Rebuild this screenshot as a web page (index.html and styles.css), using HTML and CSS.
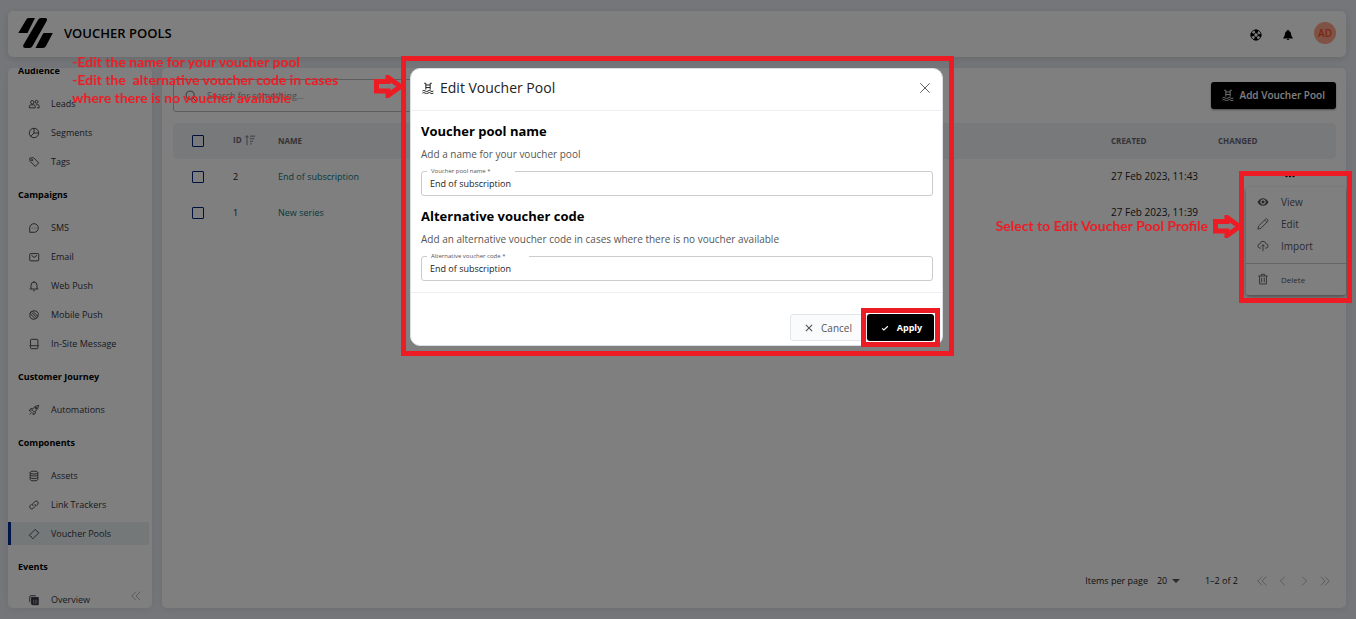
FILE: index.html
```html
<!DOCTYPE html>
<html lang="en">
<head>
  <meta charset="UTF-8" />
  <meta name="viewport" content="width=device-width, initial-scale=1.0" />
  <title>Voucher Pools</title>
  <link rel="stylesheet" href="styles.css">
</head>
<body>

<!-- shared icons -->
<svg class="sprite" aria-hidden="true">
  <symbol id="i-pool" viewBox="0 0 14 14"><path d="M2.500 1.500h2v7.500M11.500 1.500h-2v7.500M4.500 3.500h5M4.500 6.500h5M.5 10.500q1.600-1.500 3.200 0t3.200 0 3.200 0 3.200 0M.5 13q1.600-1.500 3.200 0t3.200 0 3.200 0 3.200 0"/></symbol>
  <symbol id="i-leads" viewBox="0 0 14 14"><circle cx="5" cy="5" r="2"/><circle cx="10" cy="4.500" r="1.700"/><path d="M1.500 11.500V10q0-2 2-2h3q2 0 2 2v1.500zM9.500 7.700h1.500q2 0 2 2v1.800h-2.500"/></symbol>
  <symbol id="i-segments" viewBox="0 0 14 14"><circle cx="7" cy="7" r="5.500"/><path d="M7 1.500V7h5.500M7 7l-4 4"/></symbol>
  <symbol id="i-tags" viewBox="0 0 14 14"><path d="M2 2.500l4.500-.5 6 6-4 4.200-6-6z"/><circle cx="4.800" cy="4.800" r=".8"/></symbol>
  <symbol id="i-sms" viewBox="0 0 14 14"><path d="M2 12V7a5 5 0 1 1 5 5zM4.500 7h.6M6.800 7h.6M9 7h.6"/></symbol>
  <symbol id="i-email" viewBox="0 0 14 14"><rect x="2" y="3" width="10.500" height="8.500" rx="1"/><path d="M4 5l3.200 2.500L10.500 5"/></symbol>
  <symbol id="i-bell" viewBox="0 0 14 14"><path d="M2 10.500h10M3.500 10.300V6a3.500 3.500 0 0 1 7 0v4.300M7 1.200v1.300M6 12.500h2"/></symbol>
  <symbol id="i-mobile" viewBox="0 0 14 14"><path d="M5.500 2.500l6 6.200M2.500 5.300l6 6.200M2.500 5.300Q2 3 5.500 2.500L8 2q3 .5 4 3l-.5 3.700q-.5 2-3 2.800l-2.500.5Q3 11.500 2.200 9zM4.200 4l6 6"/></symbol>
  <symbol id="i-insite" viewBox="0 0 14 14"><path d="M3 8.500V2.500q0-1 1-1h6.500q1 0 1 1v6M1.500 9h11.500M3 9.500v2q0 1 1 1h6.500q1 0 1-1v-2"/></symbol>
  <symbol id="i-rocket" viewBox="0 0 14 14"><path d="M12.500 1.500Q8 2 4.500 6.500l3 3Q12 6 12.500 1.500zM5 5.500H3L1.500 8l2.500.2M8.500 9v2L6 12.500 5.800 10M2 12.200l2.500-2.500"/><circle cx="9.200" cy="4.800" r="1"/></symbol>
  <symbol id="i-assets" viewBox="0 0 14 14"><ellipse cx="7" cy="3" rx="4.500" ry="1.700"/><path d="M2.500 3v8q0 1.700 4.500 1.700t4.500-1.700V3M2.500 5.700Q3 7 7 7t4.500-1.300M2.500 8.500Q3 10 7 10t4.500-1.500"/></symbol>
  <symbol id="i-link" viewBox="0 0 14 14"><path d="M6 8.300q-1.500-2 0-3.300l2.200-2.200q1.500-1 3 .2t.3 3.200L9.800 8M8 5.800q1.500 2 0 3.200l-2.200 2.200q-1.500 1-3-.2t-.3-3.200L4.200 6"/></symbol>
  <symbol id="i-voucher" viewBox="0 0 14 14"><path d="M8.500 1.500l1.200 1.200q.2 1.600 1.700 1.700l1.200 1.200-7 7-1.300-1.300q0-1.600-1.700-1.700L1.500 8.500z"/></symbol>
  <symbol id="i-overview" viewBox="0 0 14 14"><path d="M2 9.500v-6q0-1.500 1.500-1.500H9" /><path fill="currentColor" d="M4 4h8v8.500H5.500Q4 12.500 4 11z"/><path stroke="#9a9aa0" d="M6.500 6.500v5M8.500 6.500v5M10.300 6.500v5"/></symbol>
  <symbol id="i-search" viewBox="0 0 14 14"><circle cx="6" cy="6" r="4.700"/><path d="M9.500 9.500L13 13"/></symbol>
  <symbol id="i-double-left" viewBox="0 0 14 14"><path d="M7 2L2 7l5 5M12 2L7 7l5 5"/></symbol>
  <symbol id="i-left" viewBox="0 0 14 14"><path d="M9 2L4 7l5 5"/></symbol>
  <symbol id="i-right" viewBox="0 0 14 14"><path d="M5 2l5 5-5 5"/></symbol>
  <symbol id="i-double-right" viewBox="0 0 14 14"><path d="M2 2l5 5-5 5M7 2l5 5-5 5"/></symbol>
  <symbol id="i-close" viewBox="0 0 14 14"><path d="M1.500 1.500l11 11M12.500 1.500l-11 11"/></symbol>
  <symbol id="i-check" viewBox="0 0 14 14"><path d="M2 7.500l3 3L12 4"/></symbol>
  <symbol id="i-arrow" viewBox="0 0 30 23"><path d="M2.500 6.500H14V2.500L26.500 11.500 14 20.500V16H2.500z"/></symbol>
</svg>

<header class="topbar">
  <svg class="logo" viewBox="0 0 35 30" role="img" aria-label="Logo">
    <path d="M.3 15L8 2Q9 0 10.500 0H17L9.500 15zM5.300 27L20 2Q21 0 23 0h4q3 0 1.700 3L14.500 28q-1 2-3 2H7.500Q4.500 30 5.300 27zM17.500 30l7.300-14q.5-1 1.700-1h8.300L28 28q-1 2-3 2z"/>
  </svg>
  <h1>VOUCHER POOLS</h1>
  <div class="topbar-actions">
    <button class="icon-button" aria-label="Help">
      <svg viewBox="0 0 14 14"><circle cx="7" cy="7" r="4.200" fill="none" stroke="#000" stroke-width="4" stroke-dasharray="3.600 2.997" stroke-dashoffset="1.800"/><circle cx="7" cy="7" r="6" fill="none" stroke="#000"/><circle cx="7" cy="7" r="2.500" fill="none" stroke="#000" stroke-width=".8"/></svg>
    </button>
    <button class="icon-button" aria-label="Notifications">
      <svg viewBox="0 0 14 14"><path d="M7 1q1 0 1 1 2.500.7 2.700 4 .1 3 1.800 4.200v.8h-11v-.8Q3.200 9 3.300 6 3.500 2.700 6 2q0-1 1-1zM5.500 11.700h3Q8.300 13 7 13t-1.500-1.300z"/></svg>
    </button>
    <button class="avatar">AD</button>
  </div>
</header>

<div class="layout">
  <nav class="sidebar">
    <div class="sidebar-scroll">
      <h2>Audience</h2>
      <a href="#"><svg class="icon"><use href="#i-leads"/></svg>Leads</a>
      <a href="#"><svg class="icon"><use href="#i-segments"/></svg>Segments</a>
      <a href="#"><svg class="icon"><use href="#i-tags"/></svg>Tags</a>
      <h2>Campaigns</h2>
      <a href="#"><svg class="icon"><use href="#i-sms"/></svg>SMS</a>
      <a href="#"><svg class="icon"><use href="#i-email"/></svg>Email</a>
      <a href="#"><svg class="icon"><use href="#i-bell"/></svg>Web Push</a>
      <a href="#"><svg class="icon"><use href="#i-mobile"/></svg>Mobile Push</a>
      <a href="#"><svg class="icon"><use href="#i-insite"/></svg>In-Site Message</a>
      <h2>Customer Journey</h2>
      <a href="#"><svg class="icon"><use href="#i-rocket"/></svg>Automations</a>
      <h2>Components</h2>
      <a href="#"><svg class="icon"><use href="#i-assets"/></svg>Assets</a>
      <a href="#"><svg class="icon"><use href="#i-link"/></svg>Link Trackers</a>
      <a href="#" class="active"><svg class="icon"><use href="#i-voucher"/></svg>Voucher Pools</a>
      <h2>Events</h2>
      <a href="#"><svg class="icon"><use href="#i-overview"/></svg>Overview</a>
    </div>
    <button class="collapse" aria-label="Collapse menu"><svg class="icon"><use href="#i-double-left"/></svg></button>
  </nav>

  <main>
    <div class="toolbar">
      <div class="search">
        <svg class="icon"><use href="#i-search"/></svg>
        <input type="search" aria-label="Search" placeholder="Search for something...">
      </div>
      <button class="add"><svg class="icon"><use href="#i-pool"/></svg>Add Voucher Pool</button>
    </div>

    <table>
      <thead>
        <tr>
          <th class="col-check"><input type="checkbox" aria-label="Select all"></th>
          <th class="col-id">ID <svg class="icon sort" viewBox="0 0 14 14"><path d="M3.500 13V2M1.500 4l2-2 2 2M7 2.500h6M7 5.500h5M7 8.500h3.500M7 11.500h2"/></svg></th>
          <th>NAME</th>
          <th class="col-date">CREATED</th>
          <th class="col-changed">CHANGED</th>
          <th class="col-more"></th>
        </tr>
      </thead>
      <tbody>
        <tr>
          <td><input type="checkbox" aria-label="Select End of subscription"></td>
          <td>2</td>
          <td><a href="#">End of subscription</a></td>
          <td class="date">27 Feb 2023, 11:43</td>
          <td></td>
          <td><button class="more" aria-label="Row actions"><svg viewBox="0 0 10 4"><circle cx="1.500" cy="2" r="1.200"/><circle cx="5" cy="2" r="1.200"/><circle cx="8.500" cy="2" r="1.200"/></svg></button></td>
        </tr>
        <tr>
          <td><input type="checkbox" aria-label="Select New series"></td>
          <td>1</td>
          <td><a href="#">New series</a></td>
          <td class="date">27 Feb 2023, 11:39</td>
          <td></td>
          <td></td>
        </tr>
      </tbody>
    </table>

    <div class="menu">
      <button><svg class="icon" viewBox="0 0 14 14"><path fill="currentColor" fill-rule="evenodd" stroke="none" d="M.5 7Q3 2.500 7 2.500T13.500 7Q11 11.500 7 11.500T.5 7zM7 3.800a3.200 3.200 0 1 0 .01 0zM7 5.200a1.800 1.800 0 1 1-.01 0z"/></svg>View</button>
      <button><svg class="icon" viewBox="0 0 14 14"><path d="M1 13l1-3.800L10 1.300q1.300-.8 2.300.3t.3 2.200L4.600 12zM9 2.500L11.500 5"/></svg>Edit</button>
      <button><svg class="icon" viewBox="0 0 14 14"><path d="M4.500 9.500H3.500Q1 9.300 1 7t2.500-2.500Q4.300 1.500 7 1.500t3.500 3Q13 4.700 13 7t-2.500 2.500h-1M7 13V5.500M5 7.500l2-2 2 2"/></svg>Import</button>
      <hr>
      <button class="delete"><svg class="icon" viewBox="0 0 14 14"><path d="M1.500 3.500h11M5 3.200V1.500h4v1.700M3 3.500v9.300h8V3.500M5.500 5.500v5.300M8.500 5.500v5.300"/></svg>Delete</button>
    </div>

    <footer class="pagination">
      <label for="per-page">Items per page</label>
      <div class="per-page">
        <select id="per-page"><option>20</option><option>50</option></select>
        <svg viewBox="0 0 8 4"><path d="M0 0h8L4 4z"/></svg>
      </div>
      <span class="range">1–2 of 2</span>
      <button aria-label="First page"><svg class="icon"><use href="#i-double-left"/></svg></button>
      <button aria-label="Previous page"><svg class="icon"><use href="#i-left"/></svg></button>
      <button aria-label="Next page"><svg class="icon"><use href="#i-right"/></svg></button>
      <button aria-label="Last page"><svg class="icon"><use href="#i-double-right"/></svg></button>
    </footer>
  </main>
</div>

<div class="backdrop">
  <div class="modal highlight" role="dialog" aria-labelledby="modal-title">
    <div class="modal-header">
      <svg class="icon"><use href="#i-pool"/></svg>
      <h2 id="modal-title">Edit Voucher Pool</h2>
      <button class="close" aria-label="Close"><svg class="icon"><use href="#i-close"/></svg></button>
    </div>
    <div class="modal-body">
      <h3>Voucher pool name</h3>
      <p>Add a name for your voucher pool</p>
      <div class="field">
        <label for="pool-name">Voucher pool name *</label>
        <input type="text" id="pool-name" value="End of subscription">
      </div>
      <h3>Alternative voucher code</h3>
      <p>Add an alternative voucher code in cases where there is no voucher available</p>
      <div class="field">
        <label for="alt-code">Alternative voucher code *</label>
        <input type="text" id="alt-code" value="End of subscription">
      </div>
    </div>
    <div class="modal-footer">
      <button class="cancel"><svg class="icon"><use href="#i-close"/></svg>Cancel</button>
      <div class="apply-wrap highlight">
        <button class="apply"><svg class="icon"><use href="#i-check"/></svg>Apply</button>
      </div>
    </div>
  </div>
</div>

<!-- notes over the page -->
<div class="note note-edit">
  <p>-Edit the name for your voucher pool
-Edit the  alternative voucher code in cases
where there is no voucher available</p>
  <svg class="arrow"><use href="#i-arrow"/></svg>
</div>
<div class="note note-select">
  <p>Select to Edit Voucher Pool Profile</p>
  <svg class="arrow"><use href="#i-arrow"/></svg>
</div>
<div class="menu-frame"></div>

</body>
</html>
```
FILE: styles.css
```css
* {
  box-sizing: border-box;
}
body {
  margin: 0;
  padding: 11px 10px 11px 8px;
  min-height: 100vh;
  display: flex;
  flex-direction: column;
  gap: 11px;
  position: relative;
  background: #e9edf3;
  font-family: "Open Sans", "Noto Sans", sans-serif;
  font-size: 9px;
  color: #222;
}
h1, h2, h3, p {
  margin: 0;
}
button, input, select {
  font: inherit;
  color: inherit;
}
button {
  display: flex;
  align-items: center;
  justify-content: center;
  padding: 0;
  border: none;
  background: none;
  cursor: pointer;
}
a {
  text-decoration: none;
}
.sprite {
  display: none;
}
.icon {
  width: 12px;
  height: 12px;
  flex: none;
  fill: none;
  stroke: currentColor;
  stroke-width: 1;
}

/* top bar */
.topbar {
  height: 46px;
  padding: 0 10px 2px;
  display: flex;
  align-items: center;
  background: #fff;
  border-radius: 5px;
  box-shadow: 0 2px 8px rgba(0,0,0,0.12);
}
.logo {
  width: 35px;
  height: 30px;
  margin-right: 11px;
}
.topbar h1 {
  font-size: 13px;
  font-weight: 600;
  color: #000;
}
.topbar-actions {
  margin-left: auto;
  display: flex;
  align-items: center;
  gap: 20px;
}
.icon-button {
  padding-top: 4px;
}
.icon-button svg {
  width: 12px;
  height: 12px;
  display: block;
}
.avatar {
  width: 22px;
  height: 22px;
  border-radius: 50%;
  background: #ffa58a;
  color: #f4511e;
  font-size: 10px;
  font-weight: 600;
}

/* sidebar */
.layout {
  flex: 1;
  display: flex;
  gap: 10px;
  min-height: 0;
}
.sidebar {
  width: 144px;
  height: calc(100vh - 79px);
  position: relative;
  overflow: hidden;
  background: #fff;
  border-radius: 5px;
  box-shadow: 0 2px 8px rgba(0,0,0,0.08);
}
.sidebar-scroll {
  margin-top: -16px;
}
.sidebar h2 {
  padding-left: 10px;
  font-size: 9px;
  line-height: 37px;
  font-weight: 700;
  color: #000;
}
.sidebar a {
  display: flex;
  align-items: center;
  gap: 11px;
  height: 23px;
  margin: 3px 3px 6px 0;
  padding-left: 20px;
  color: #33343e;
}
.sidebar-scroll a + h2 {
  margin-top: -3px;
}
.sidebar a.active {
  padding-left: 17px;
  border-left: 3px solid #002a8f;
  background: #e9f1f2;
}
.collapse {
  position: absolute;
  right: 10px;
  bottom: 6px;
  color: #aaa;
}

/* list */
main {
  flex: 1;
  display: flex;
  flex-direction: column;
  position: relative;
  padding: 11px 10px 21px 11px;
  background: #fff;
  border-radius: 5px;
  box-shadow: 0 2px 8px rgba(0,0,0,0.08);
}
.toolbar {
  display: flex;
  align-items: center;
  justify-content: space-between;
  margin-bottom: 11px;
}
.search {
  width: 40%;
  height: 33px;
  display: flex;
  align-items: center;
  gap: 10px;
  padding: 0 11px;
  border: 1px solid #bbb;
  border-radius: 3px;
  color: #555;
}
.search input {
  flex: 1;
  padding: 0;
  border: none;
  outline: none;
  background: none;
}
.search input::placeholder {
  color: #999;
}
.add {
  height: 27px;
  gap: 6px;
  padding: 0 11px 2px;
  border-radius: 3px;
  background: #000;
  color: #fff;
  font-size: 10px;
  font-weight: 600;
  box-shadow: 0 1px 2px rgba(0,0,0,0.4);
}
table {
  width: 100%;
  table-layout: fixed;
  border-collapse: collapse;
}
th, td {
  height: 36px;
  padding: 0 0 2px;
  text-align: left;
}
th {
  background: #eff2f6;
  color: #6b6575;
  font-size: 8px;
  font-weight: 700;
}
th:first-child, td:first-child {
  padding: 0;
}
th:first-child {
  border-radius: 5px 0 0 5px;
}
th:last-child {
  border-radius: 0 5px 5px 0;
}
td a {
  color: #0d7377;
}
.date {
  font-size: 10px;
}
.col-check {
  width: 60px;
}
.col-id {
  width: 45px;
}
.col-date {
  width: 107px;
}
.col-changed {
  width: 67px;
}
.col-more {
  width: 51px;
}
.sort {
  vertical-align: middle;
}
input[type="checkbox"] {
  appearance: none;
  display: block;
  width: 12px;
  height: 12px;
  margin: 0 0 0 19px;
  border: 1px solid #00237a;
  border-radius: 1px;
}
.more svg {
  width: 10px;
  height: 4px;
}

.menu {
  position: absolute;
  top: 119px;
  right: 0;
  width: 100px;
  padding: 4px 0 5px;
  background: #fff;
  border-radius: 3px;
  box-shadow: 0 2px 4px rgba(0,0,0,0.4);
}
.menu button {
  width: 100%;
  height: 22px;
  padding-left: 11px;
  justify-content: flex-start;
  gap: 12px;
  color: #55565f;
  font-size: 10px;
}
.menu hr {
  margin: 6px 0 4px;
  border: none;
  border-top: 1px solid #ccc;
}
.menu .delete {
  font-size: 8px;
}

.pagination {
  margin-top: auto;
  display: flex;
  align-items: center;
  justify-content: flex-end;
  gap: 9px;
  padding-right: 5px;
}
.per-page {
  display: flex;
  align-items: center;
}
.per-page select {
  appearance: none;
  width: 15px;
  padding: 0;
  border: none;
  background: none;
}
.per-page svg {
  width: 8px;
  height: 4px;
  fill: #555;
}
.pagination .range {
  margin: 0 9px 0 16px;
}
.pagination button {
  color: #aaa;
}

/* dialog */
.backdrop {
  position: fixed;
  inset: 0;
  display: flex;
  justify-content: center;
  align-items: flex-start;
  padding: 68px 11px 0 8px;
  background: rgba(0,0,0,0.5);
}
.modal {
  position: relative;
  width: 533px;
  max-width: 100%;
  background: #fff;
  border: 1px solid #dce0e4;
  border-radius: 10px;
}
.highlight::after {
  content: "";
  position: absolute;
  border: 5px solid #ed1c24;
  pointer-events: none;
}
.modal::after {
  inset: -13px -12px -11px -10px;
}
.modal-header {
  display: flex;
  align-items: center;
  gap: 6px;
  height: 42px;
  padding: 0 11px 4px 11px;
  border-bottom: 1px solid #eee;
  color: #000;
}
.modal-header h2 {
  font-size: 14px;
  font-weight: 400;
  color: #222;
}
.close {
  margin-left: auto;
  color: #444;
}
.modal-body {
  padding: 10px 9px 11px 10px;
}
.modal-body h3 {
  font-size: 13px;
  line-height: 20px;
  font-weight: 700;
  color: #000;
}
.modal-body p {
  margin: 5px 0 9px;
  font-size: 10px;
  line-height: 16px;
  color: #555;
}
.field {
  position: relative;
}
.field + h3 {
  margin-top: 10px;
}
.field label {
  position: absolute;
  top: -4px;
  left: 6px;
  padding: 0 24px 0 4px;
  background: #fff;
  font-size: 6px;
  line-height: 9px;
  color: #555;
}
.field input {
  display: block;
  width: 100%;
  height: 25px;
  padding: 0 8px;
  border: 1px solid #ccc;
  border-radius: 3px;
  outline: none;
}
.modal-footer {
  display: flex;
  justify-content: flex-end;
  padding: 21px 8px 4px;
  border-top: 1px solid #eee;
}
.modal-footer button {
  height: 27px;
  gap: 8px;
  border-radius: 3px;
}
.modal-footer .icon {
  width: 8px;
  height: 8px;
  stroke-width: 2;
}
.cancel {
  width: 77px;
  border: 1px solid #e4e6e9;
  background: #fafbfd;
  color: #555;
  font-size: 10px;
}
.apply-wrap {
  position: relative;
}
.apply-wrap::after {
  inset: -6px;
}
.apply {
  width: 67px;
  padding-left: 2px;
  background: #000;
  color: #fff;
  font-weight: 700;
}

/* notes */
.note {
  position: absolute;
  display: flex;
  align-items: center;
  color: #ed1c24;
  font-family: Lato, sans-serif;
  font-size: 14px;
  line-height: 18px;
  font-weight: 700;
  white-space: pre;
}
.note p {
  padding-bottom: 2px;
}
.arrow {
  width: 30px;
  height: 23px;
  fill: none;
  stroke: #ed1c24;
  stroke-width: 5;
}
.note-edit {
  top: 53px;
  left: 72px;
  width: 332px;
  justify-content: space-between;
}
.note-edit .arrow {
  margin-top: 10px;
}
.note-select {
  top: 215px;
  right: 113px;
  gap: 5px;
}
.menu-frame {
  position: absolute;
  top: 171px;
  right: 4px;
  width: 113px;
  height: 132px;
  border: 5px solid #ed1c24;
}
```
